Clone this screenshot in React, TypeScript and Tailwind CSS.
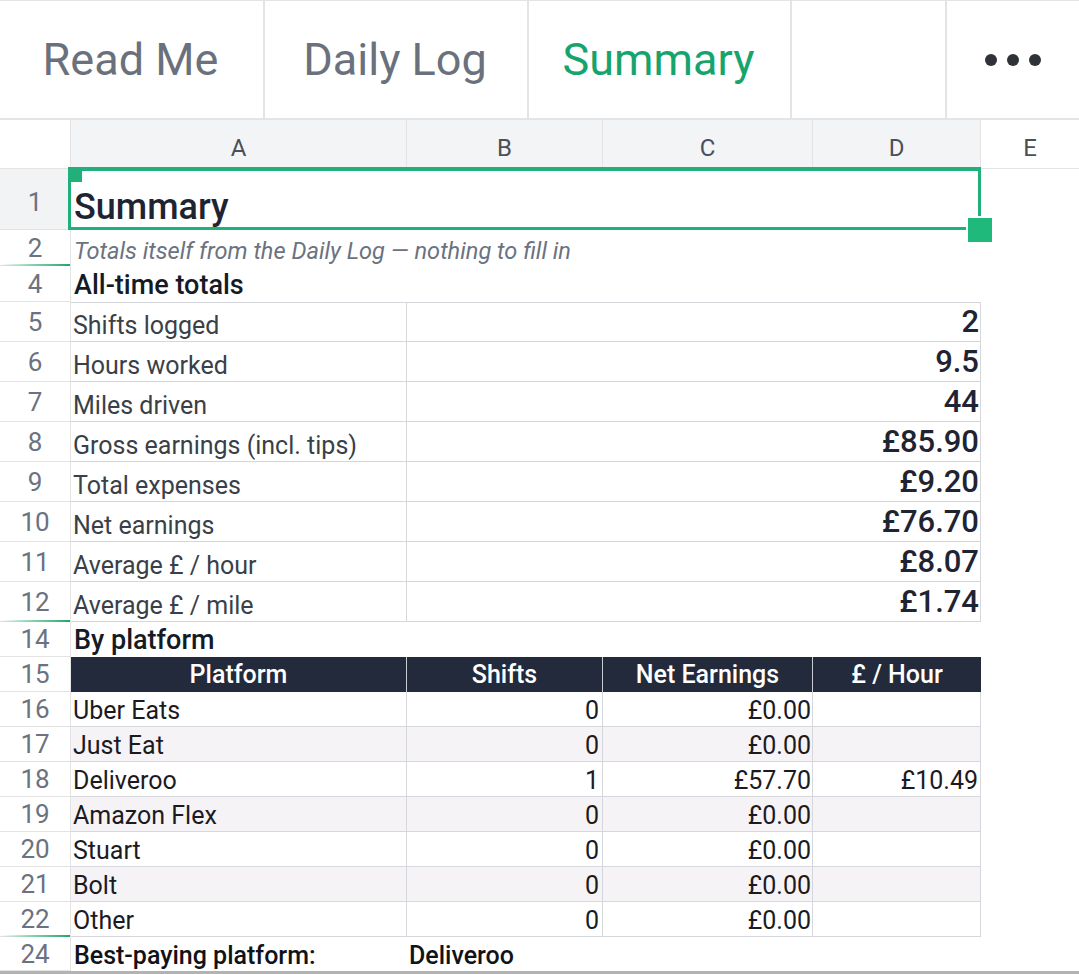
import React from "react";

type RowNumProps = {
  n: number;
  h: string;
  selected?: boolean;
  hiddenBelow?: boolean;
};

// Row index cell in the left gutter; hiddenBelow draws the green "hidden rows" marker.
function RowNum({ n, h, selected, hiddenBelow }: RowNumProps) {
  return (
    <div
      className={`relative flex items-center justify-center border-r border-b border-[#e3e3e3] text-[26px] leading-none text-[#6b7280] ${h} ${
        selected ? "bg-[#f1f3f4] pt-[6px]" : "bg-white"
      }`}
    >
      {n}
      {hiddenBelow && (
        <div className="absolute -bottom-px left-0 h-[2px] w-full bg-linear-to-r from-[#ffffff00] via-[#7fcfa9] to-[#1aa56f]" />
      )}
    </div>
  );
}

const totals: [number, string, string][] = [
  [5, "Shifts logged", "2"],
  [6, "Hours worked", "9.5"],
  [7, "Miles driven", "44"],
  [8, "Gross earnings (incl. tips)", "£85.90"],
  [9, "Total expenses", "£9.20"],
  [10, "Net earnings", "£76.70"],
  [11, "Average £ / hour", "£8.07"],
  [12, "Average £ / mile", "£1.74"],
];

const platforms: [number, string, string, string, string][] = [
  [16, "Uber Eats", "0", "£0.00", ""],
  [17, "Just Eat", "0", "£0.00", ""],
  [18, "Deliveroo", "1", "£57.70", "£10.49"],
  [19, "Amazon Flex", "0", "£0.00", ""],
  [20, "Stuart", "0", "£0.00", ""],
  [21, "Bolt", "0", "£0.00", ""],
  [22, "Other", "0", "£0.00", ""],
];

export default function App() {
  return (
    <div className="h-[974px] w-[1079px] overflow-hidden bg-white font-['Roboto','Noto_Sans',sans-serif]">
      {/* Sheet tabs */}
      <div className="flex h-[120px] border-t border-b-2 border-[#e4e4e4] text-[45px] leading-none">
        <div className="flex w-[265px] items-center justify-center border-r-2 border-[#e4e4e4] pr-[2px] text-[#6b717c]">
          Read Me
        </div>
        <div className="flex w-[264px] items-center justify-center border-r-2 border-[#e4e4e4] pr-[2px] text-[#6b717c]">
          Daily Log
        </div>
        <div className="flex w-[263px] items-center justify-center border-r-2 border-[#e4e4e4] pr-[2px] text-[#17a46c]">
          Summary
        </div>
        <div className="w-[155px] border-r-2 border-[#e4e4e4]" />
        <div className="flex flex-1 items-center justify-center gap-[10px]">
          <span className="h-[12px] w-[12px] rounded-full bg-[#2f3338]" />
          <span className="h-[12px] w-[12px] rounded-full bg-[#2f3338]" />
          <span className="h-[12px] w-[12px] rounded-full bg-[#2f3338]" />
        </div>
      </div>

      {/* Grid */}
      <div className="relative">
        <div className="grid grid-cols-[71px_336px_196px_210px_168px_98px]">
          {/* Column headers */}
          <div className="h-[49px] border-r border-b border-[#e3e3e3] bg-white" />
          {["A", "B", "C", "D"].map((c) => (
            <div
              key={c}
              className="flex h-[49px] items-center justify-center border-r border-b border-[#e3e3e3] bg-[#f3f4f6] pt-[7px] text-[24px] leading-none text-[#4b5058]"
            >
              {c}
            </div>
          ))}
          <div className="flex h-[49px] items-center justify-center border-b border-[#e3e3e3] bg-white pt-[7px] text-[24px] leading-none text-[#4b5058]">
            E
          </div>

          {/* Row 1 */}
          <RowNum n={1} h="h-[61px]" selected />
          <div className="col-span-4 flex items-end pl-[3px] pb-[1px] text-[36px] font-medium leading-[44px] text-[#1f2433]">
            Summary
          </div>
          <div />

          {/* Row 2 */}
          <RowNum n={2} h="h-[36px]" hiddenBelow />
          <div className="col-span-4 flex items-end pl-[3px] pb-[1px] text-[23.6px] italic leading-[28px] text-[#6b7280]">
            Totals itself from the Daily Log — nothing to fill in
          </div>
          <div />

          {/* Row 4 */}
          <RowNum n={4} h="h-[36px]" />
          <div className="col-span-4 flex items-end pl-[3px] pb-[1px] text-[27px] font-medium leading-[32px] text-[#151a24]">
            All-time totals
          </div>
          <div />

          {/* All-time totals */}
          {totals.map(([n, label, value], i) => (
            <React.Fragment key={n}>
              <RowNum n={n} h="h-[40px]" hiddenBelow={n === 12} />
              <div
                className={`flex items-end border-r border-b border-[#d5d7dd] pl-[2px] text-[25px] leading-[30px] text-[#3a3f48] ${
                  i === 0 ? "border-t" : ""
                }`}
              >
                {label}
              </div>
              <div
                className={`col-span-3 flex items-end justify-end border-r border-b border-[#d5d7dd] pr-[1px] pb-[4px] text-[31px] font-medium leading-[31px] text-[#1f2433] ${
                  i === 0 ? "border-t" : ""
                }`}
              >
                {value}
              </div>
              <div />
            </React.Fragment>
          ))}

          {/* Row 14 */}
          <RowNum n={14} h="h-[35px]" />
          <div className="col-span-4 flex items-end pl-[3px] pb-[1px] text-[27px] font-medium leading-[32px] text-[#151a24]">
            By platform
          </div>
          <div />

          {/* Row 15: table header */}
          <RowNum n={15} h="h-[35px]" />
          {["Platform", "Shifts", "Net Earnings", "£ / Hour"].map((t, i) => (
            <div
              key={t}
              className={`flex items-end justify-center bg-[#222a3b] pb-[2px] text-[25px] font-medium leading-[30px] text-white ${
                i < 3 ? "border-r border-[#c9ccd3]" : ""
              }`}
            >
              {t}
            </div>
          ))}
          <div />

          {/* Platform rows */}
          {platforms.map(([n, name, shifts, net, perHour], i) => {
            const bg = i % 2 === 1 ? "bg-[#f6f3f7]" : "bg-white";
            return (
              <React.Fragment key={n}>
                <RowNum n={n} h="h-[35px]" hiddenBelow={n === 22} />
                <div
                  className={`flex items-end border-r border-b border-[#d5d7dd] pl-[2px] text-[25px] leading-[30px] text-[#1b1b1f] ${bg}`}
                >
                  {name}
                </div>
                <div
                  className={`flex items-end justify-end border-r border-b border-[#d5d7dd] pr-[3px] text-[25px] leading-[30px] text-[#1b1b1f] ${bg}`}
                >
                  {shifts}
                </div>
                <div
                  className={`flex items-end justify-end border-r border-b border-[#d5d7dd] pr-[1px] text-[25px] leading-[30px] text-[#1b1b1f] ${bg}`}
                >
                  {net}
                </div>
                <div
                  className={`flex items-end justify-end border-r border-b border-[#d5d7dd] pr-[2px] text-[25px] leading-[30px] text-[#1b1b1f] ${bg}`}
                >
                  {perHour}
                </div>
                <div />
              </React.Fragment>
            );
          })}

          {/* Row 24 */}
          <RowNum n={24} h="h-[34px]" />
          <div className="flex items-end pl-[3px] text-[25px] font-medium leading-[30px] text-[#111318]">
            Best-paying platform:
          </div>
          <div className="col-span-3 flex items-end pl-[2px] text-[25px] font-medium leading-[30px] text-[#111318]">
            Deliveroo
          </div>
          <div />
        </div>

        {/* Active range A1:D1 */}
        <div className="pointer-events-none absolute top-[47px] left-[68px] h-[63px] w-[913px] border-x-[3px] border-t-4 border-b-[3px] border-[#22b07a]" />
        <div className="pointer-events-none absolute top-[50px] left-[70px] h-[12px] w-[12px] bg-[#22b07a]" />
        <div className="pointer-events-none absolute top-[98px] left-[968px] h-[24px] w-[24px] bg-[#1fb97c] ring-2 ring-white" />
      </div>

      {/* Bottom bar */}
      <div className="h-[3px] bg-[#b3b3b3]" />
    </div>
  );
}
